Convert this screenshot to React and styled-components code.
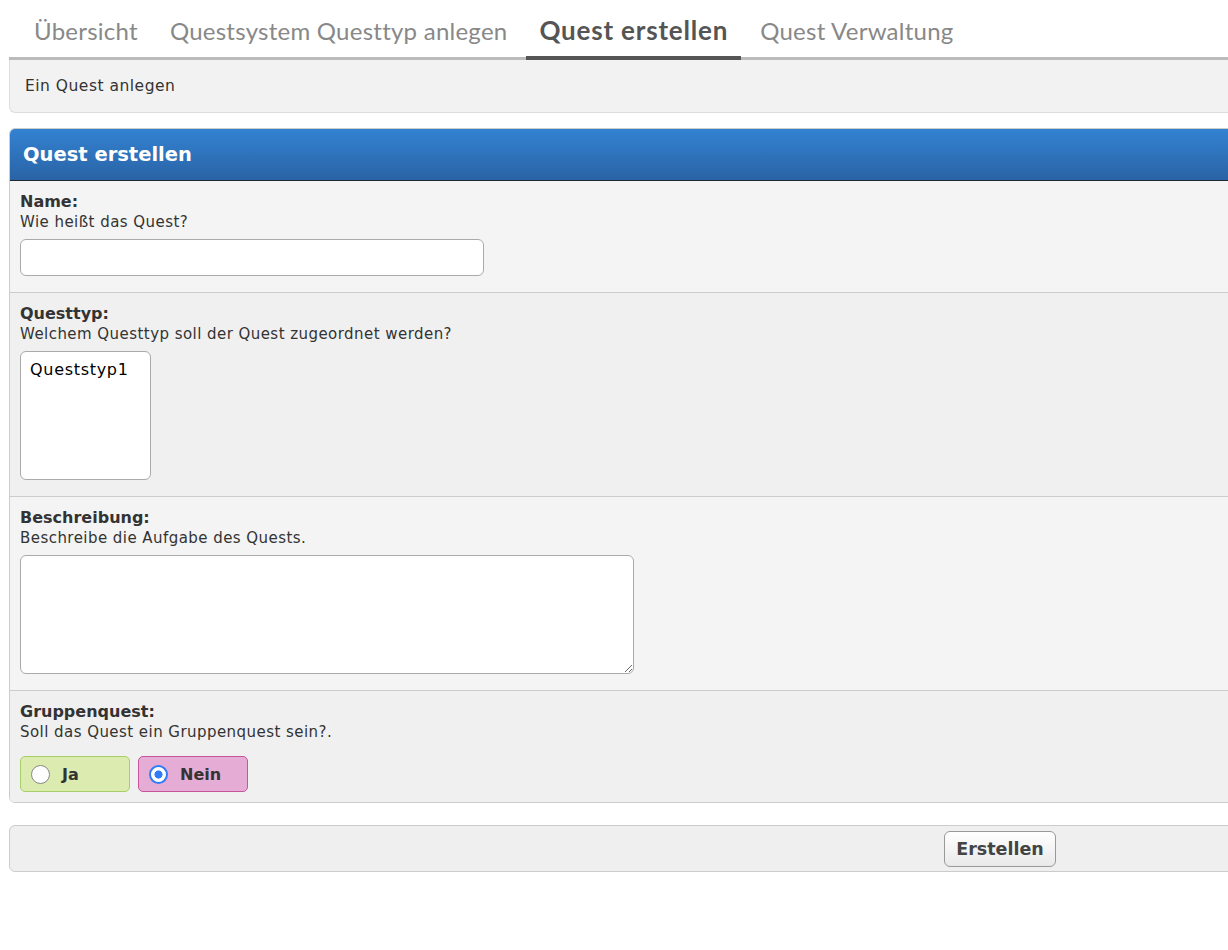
import React, { useState } from 'react';
import styled, { createGlobalStyle } from 'styled-components';

const GlobalStyle = createGlobalStyle`
  body {
    margin: 0;
    background: #fff;
    overflow: hidden;
    font-family: "DejaVu Sans", Verdana, sans-serif;
    color: #333;
  }
`;

const tabs = ['Übersicht', 'Questsystem Questtyp anlegen', 'Quest erstellen', 'Quest Verwaltung'];

const App = () => {
  const [gruppe, setGruppe] = useState('nein');

  return <Page>
    <GlobalStyle />
    <TabBar>
      {tabs.map((t) => <Tab key={t} $active={t === 'Quest erstellen'}>{t}</Tab>)}
    </TabBar>
    <InfoBox>Ein Quest anlegen</InfoBox>

    <Panel>
      <PanelHeader>Quest erstellen</PanelHeader>

      <Section>
        <Label>Name:</Label>
        <Help>Wie heißt das Quest?</Help>
        <TextInput type='text' />
      </Section>

      <Section $alt>
        <Label>Questtyp:</Label>
        <Help>Welchem Questtyp soll der Quest zugeordnet werden?</Help>
        <ListBox size={5} defaultValue={[]} multiple>
          <option value='1'>Queststyp1</option>
        </ListBox>
      </Section>

      <Section>
        <Label>Beschreibung:</Label>
        <Help>Beschreibe die Aufgabe des Quests.</Help>
        <TextArea />
      </Section>

      <Section $alt $last>
        <Label>Gruppenquest:</Label>
        <Help>Soll das Quest ein Gruppenquest sein?.</Help>
        <RadioRow>
          <RadioBox $variant='ja'>
            <Radio type='radio' name='gruppe' checked={gruppe === 'ja'} onChange={() => setGruppe('ja')} />
            Ja
          </RadioBox>
          <RadioBox $variant='nein'>
            <Radio type='radio' name='gruppe' checked={gruppe === 'nein'} onChange={() => setGruppe('nein')} />
            Nein
          </RadioBox>
        </RadioRow>
      </Section>
    </Panel>

    <Footer>
      <SubmitButton>Erstellen</SubmitButton>
    </Footer>
  </Page>;
};

export default App;

const Page = styled.div`
  width: 1260px;
  padding-left: 9px;
`;

const TabBar = styled.div`
  display: flex;
  height: 60px;
  padding-left: 12px;
  gap: 6px;
  box-shadow: inset 0 -3px 0 #bbb;
`;

const Tab = styled.div`
  box-sizing: border-box;
  height: 60px;
  padding: ${(p) => (p.$active ? '12px' : '13px')} 13px 0;
  line-height: 36px;
  font-family: Lato, "Open Sans", sans-serif;
  font-size: ${(p) => (p.$active ? '26px' : '24px')};
  letter-spacing: ${(p) => (p.$active ? '0.8px' : '0.25px')};
  font-weight: ${(p) => (p.$active ? 700 : 400)};
  color: ${(p) => (p.$active ? '#555' : '#888')};
  border-bottom: 4px solid ${(p) => (p.$active ? '#555' : 'transparent')};
  white-space: nowrap;
`;

const InfoBox = styled.div`
  box-sizing: border-box;
  height: 53px;
  display: flex;
  align-items: center;
  padding-left: 15px;
  background: #f2f2f2;
  border: 1px solid #ddd;
  border-top: none;
  border-bottom-left-radius: 6px;
  font-size: 15.5px;
  letter-spacing: 0.5px;
  color: #333;
`;

const Panel = styled.div`
  margin-top: 15px;
  border: 1px solid #ccc;
  border-radius: 6px;
  overflow: hidden;
`;

const PanelHeader = styled.div`
  height: 51px;
  display: flex;
  align-items: center;
  padding-left: 13px;
  background: linear-gradient(#3382d2, #2a63a5);
  border-bottom: 1px solid #1f2a30;
  color: #fff;
  font-weight: 700;
  font-size: 19.5px;
`;

const Section = styled.div`
  display: flex;
  flex-direction: column;
  align-items: flex-start;
  padding: 11px 10px ${(p) => (p.$last ? '10px' : '16px')};
  background: ${(p) => (p.$alt ? '#f0f0f0' : '#f4f4f4')};
  & + & {
    border-top: 1px solid #ccc;
  }
`;

const Label = styled.div`
  font-weight: 700;
  font-size: 16px;
  line-height: 20px;
  color: #333;
`;

const Help = styled.div`
  font-size: 15px;
  line-height: 20px;
  letter-spacing: 0.45px;
  color: #333;
`;

const TextInput = styled.input`
  box-sizing: border-box;
  margin-top: 7px;
  width: 464px;
  height: 37px;
  border: 1px solid #aaa;
  border-radius: 6px;
  background: #fff;
  &:focus {
    outline: none;
  }
`;

const ListBox = styled.select`
  box-sizing: border-box;
  margin-top: 7px;
  width: 131px;
  height: 129px;
  padding: 8px 7px;
  border: 1px solid #aaa;
  border-radius: 6px;
  background: #fff;
  font-family: "DejaVu Sans", sans-serif;
  font-size: 16px;
  letter-spacing: 0.7px;
  color: #000;
  overflow: hidden;
  &:focus {
    outline: none;
  }
  option {
    padding: 0 2px;
  }
`;

const TextArea = styled.textarea`
  box-sizing: border-box;
  margin-top: 7px;
  width: 614px;
  height: 119px;
  border: 1px solid #aaa;
  border-radius: 6px;
  background: #fff;
  &:focus {
    outline: none;
  }
`;

const RadioRow = styled.div`
  display: flex;
  gap: 8px;
  margin-top: 14px;
`;

const RadioBox = styled.label`
  box-sizing: border-box;
  width: 110px;
  height: 36px;
  display: flex;
  align-items: center;
  gap: 12px;
  padding-left: 10px;
  border-radius: 5px;
  border: 1px solid ${(p) => (p.$variant === 'ja' ? '#a6cf6a' : '#c8559a')};
  background: ${(p) => (p.$variant === 'ja' ? '#dcebb0' : '#e5acd6')};
  font-weight: 700;
  font-size: 16px;
  color: #333;
  cursor: pointer;
`;

const Radio = styled.input`
  appearance: none;
  box-sizing: border-box;
  margin: 0;
  width: 19px;
  height: 19px;
  border-radius: 50%;
  border: 1.5px solid #888;
  background: #fff;
  &:checked {
    border: 2.5px solid #2f7cf6;
    background: radial-gradient(circle, #2f7cf6 0 3.8px, #fff 4.3px);
  }
`;

const Footer = styled.div`
  box-sizing: border-box;
  margin-top: 22px;
  height: 47px;
  display: flex;
  align-items: center;
  padding-left: 934px;
  background: #efefef;
  border: 1px solid #ccc;
  border-radius: 6px;
`;

const SubmitButton = styled.button`
  box-sizing: border-box;
  width: 112px;
  height: 36px;
  border: 1px solid #999;
  border-radius: 6px;
  background: linear-gradient(#fff, #e9e9e9);
  font-family: "DejaVu Sans", sans-serif;
  font-weight: 700;
  font-size: 17.5px;
  color: #444;
  cursor: pointer;
`;
